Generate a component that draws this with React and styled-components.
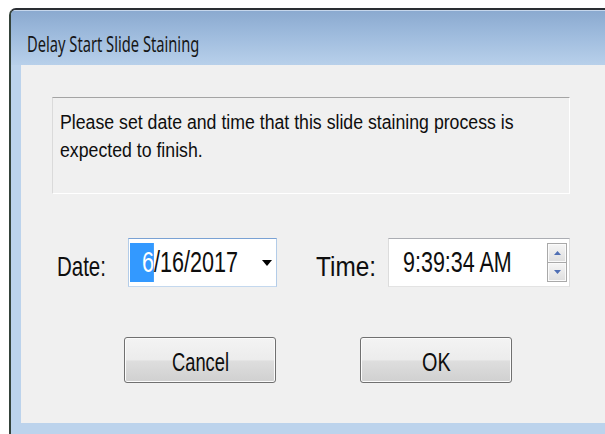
import React, { useLayoutEffect, useRef, useState } from 'react';
import styled, { createGlobalStyle } from 'styled-components';

const Global = createGlobalStyle`
  html, body { margin: 0; padding: 0; background: #ffffff; overflow: hidden; }
  body { width: 605px; height: 434px; }
`;

const Screen = styled.div`
  box-sizing: border-box;
  height: 434px;
  padding: 8px 0 0 9px;
  overflow: hidden;
`;

const Window = styled.div`
  box-sizing: border-box;
  width: 620px;
  height: 440px;
  display: flex;
  flex-direction: column;
  border-top: 2px solid #2a2e33;
  border-left: 2px solid #34423a;
  border-top-left-radius: 7px;
  background: #bcd3ec;
  overflow: hidden;
`;

const TitleBar = styled.div`
  box-sizing: border-box;
  height: 55px;
  padding: 20px 0 0 16px;
  background: linear-gradient(to bottom, #8aa9cf 0%, #9ebbdd 45%, #b8d0ea 100%);
  box-shadow: inset 0 1px 0 #c6d7ec;
  font-family: "Noto Sans", "Open Sans", sans-serif;
  font-size: 21px;
  line-height: 28px;
  color: #161616;
`;

const Client = styled.div`
  position: relative;
  box-sizing: border-box;
  height: 358px;
  margin-left: 10px;
  display: flex;
  flex-direction: column;
  background: #f0f0f0;
  font-family: "Liberation Sans", Arial, sans-serif;
  color: #0e0e0e;
`;

const MessageBox = styled.div`
  box-sizing: border-box;
  width: 518px;
  height: 97px;
  margin: 32px 0 0 31px;
  padding: 10px 0 0 7px;
  border: 1px solid;
  border-color: #a4a4a4 #ffffff #ffffff #dadada;
  font-size: 20px;
  line-height: 28px;
`;

const FieldRow = styled.div`
  display: flex;
  align-items: flex-start;
  margin: 44px 0 0 36px;
`;

const FieldLabel = styled.div`
  width: ${p => p.$w}px;
  margin-left: ${p => p.$gap || 0}px;
  padding-top: 4px;
  font-size: 28px;
  line-height: 49px;
`;

const Field = styled.div`
  box-sizing: border-box;
  width: ${p => p.$w}px;
  height: 49px;
  display: flex;
  align-items: center;
  padding: 0 ${p => p.$padR}px 0 ${p => p.$padL}px;
  background: #ffffff;
  border: 1px solid;
  border-color: ${p => (p.$focused ? '#7aa2d4 #b3cce8 #c4d8ee #b3cce8' : '#abadb3 #dcdcdc #e3e3e3 #dcdcdc')};
  font-size: 29px;
  line-height: 39px;
`;

const SelLead = styled.span`
  width: 12px;
  height: 39px;
  background: #3399ff;
`;

const Sel = styled.span`
  display: inline-block;
  background: #3399ff;
  color: #ffffff;
`;

const DropArrow = styled.svg`
  margin-left: auto;
  margin-right: 4px;
  flex: none;
`;

const Spinner = styled.div`
  box-sizing: border-box;
  margin-left: auto;
  width: 20px;
  height: 39px;
  display: flex;
  flex-direction: column;
  border: 1px solid #a9a9a9;
  background: #a9a9a9;
  gap: 1px;
`;

const SpinHalf = styled.div`
  flex: 1;
  display: flex;
  align-items: center;
  justify-content: center;
  background: linear-gradient(to bottom, #f6f6f6, #dedede);
  box-shadow: inset 0 0 0 1px #fbfbfb;
`;

const ButtonRow = styled.div`
  display: flex;
  gap: 84px;
  margin: 46px 0 0 103px;
`;

const Button = styled.button`
  box-sizing: border-box;
  width: 152px;
  height: 46px;
  display: flex;
  align-items: center;
  justify-content: center;
  padding: 4px 0 0 0;
  border: 1px solid #707070;
  border-radius: 3px;
  background: linear-gradient(to bottom, #f3f3f3 0%, #ececec 50%, #dedede 52%, #d0d0d0 100%);
  box-shadow: inset 0 0 0 1px #fbfbfb;
  font-family: "Liberation Sans", Arial, sans-serif;
  font-size: 26px;
  line-height: 26px;
  color: #0e0e0e;
`;

const Grip = styled.svg`
  position: absolute;
  right: 1px;
  bottom: 3px;
`;

const FitLine = styled.span`
  display: block;
  width: ${p => p.$w}px;
  white-space: nowrap;
`;

const FitInk = styled.span`
  display: inline-block;
  transform-origin: left center;
`;

// Squeezes a run of text horizontally so that it spans exactly `w` pixels.
function Fit({ w, children }) {
  const ref = useRef(null);
  const [k, setK] = useState(1);
  useLayoutEffect(() => {
    const measure = () => {
      const el = ref.current;
      if (el && el.offsetWidth) setK(w / el.offsetWidth);
    };
    measure();
    if (document.fonts && document.fonts.ready) document.fonts.ready.then(measure);
  }, [w]);
  return (
    <FitLine $w={w}>
      <FitInk ref={ref} style={{ transform: `scaleX(${k})` }}>{children}</FitInk>
    </FitLine>
  );
}

function Triangle({ up, color, w, h }) {
  return (
    <svg width={w} height={h} viewBox={`0 0 ${w} ${h}`}>
      <polygon points={up ? `0,${h} ${w},${h} ${w / 2},0` : `0,0 ${w},0 ${w / 2},${h}`} fill={color} />
    </svg>
  );
}

export default function App() {
  const dots = [
    [11, 1],
    [7, 5], [11, 5],
    [3, 9], [7, 9], [11, 9],
  ];
  return (
    <>
      <Global />
      <Screen>
        <Window>
          <TitleBar>
            <Fit w={172}>Delay Start Slide Staining</Fit>
          </TitleBar>
          <Client>
            <MessageBox>
              <Fit w={454}>
                Please set date and time that this slide staining process is
                <br />
                expected to finish.
              </Fit>
            </MessageBox>

            <FieldRow>
              <FieldLabel $w={71}>
                <Fit w={49}>Date:</Fit>
              </FieldLabel>
              <Field $w={149} $padL={1} $padR={0} $focused>
                <SelLead />
                <Fit w={96}>
                  <Sel>6</Sel>/16/2017
                </Fit>
                <DropArrow width="10" height="6" viewBox="0 0 10 6">
                  <polygon points="0,0 10,0 5,6" fill="#000000" />
                </DropArrow>
              </Field>
              <FieldLabel $w={72} $gap={39}>
                <Fit w={60}>Time:</Fit>
              </FieldLabel>
              <Field $w={182} $padL={14} $padR={2}>
                <Fit w={109}>9:39:34 AM</Fit>
                <Spinner>
                  <SpinHalf>
                    <Triangle up color="#4f6fb4" w={7} h={4} />
                  </SpinHalf>
                  <SpinHalf>
                    <Triangle color="#4f6fb4" w={7} h={4} />
                  </SpinHalf>
                </Spinner>
              </Field>
            </FieldRow>

            <ButtonRow>
              <Button>
                <Fit w={57}>Cancel</Fit>
              </Button>
              <Button>
                <Fit w={29}>OK</Fit>
              </Button>
            </ButtonRow>

            <Grip width="14" height="12" viewBox="0 0 14 12">
              {dots.map(([x, y]) => (
                <g key={`${x}-${y}`}>
                  <rect x={x + 1} y={y + 1} width="2" height="2" fill="#ffffff" />
                  <rect x={x} y={y} width="2" height="2" fill="#a8a8a8" />
                </g>
              ))}
            </Grip>
          </Client>
        </Window>
      </Screen>
    </>
  );
}
